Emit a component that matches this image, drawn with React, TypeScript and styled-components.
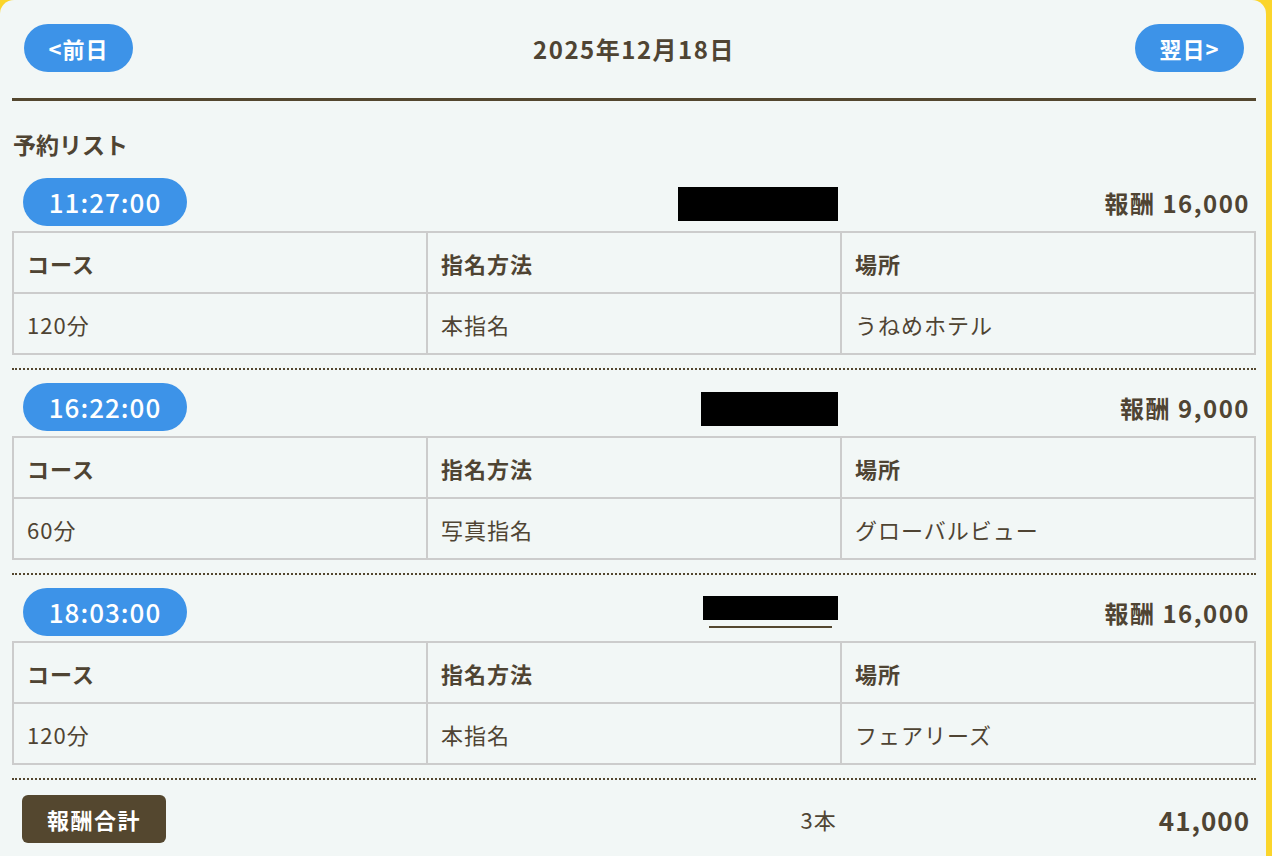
import styled, { createGlobalStyle } from 'styled-components';

interface IReservation {
  time: string;
  nameWidth: number; // 伏せ字の幅
  isLink: boolean;
  reward: string;
  course: string;
  method: string;
  place: string;
}

const reservations: Array<IReservation> = [
  { time: '11:27:00', nameWidth: 160, isLink: false, reward: '16,000', course: '120分', method: '本指名', place: 'うねめホテル' },
  { time: '16:22:00', nameWidth: 137, isLink: false, reward: '9,000', course: '60分', method: '写真指名', place: 'グローバルビュー' },
  { time: '18:03:00', nameWidth: 135, isLink: true, reward: '16,000', course: '120分', method: '本指名', place: 'フェアリーズ' },
];

const GlobalStyle = createGlobalStyle`
  html, body {
    margin: 0;
    background: #fbd52b;
  }
  body {
    font-family: "Noto Sans CJK JP", "Noto Sans", sans-serif;
    color: #4f4433;
  }
`;

const Card = styled.div`
  margin-right: 6px;
  min-height: 900px;
  padding: 24px 10px 0 12px;
  background: #f2f7f6;
  border-radius: 14px;
`;

const DayNav = styled.div`
  display: flex;
  justify-content: space-between;
  align-items: center;
  padding: 0 12px;
  margin-bottom: 26px;
`;

const NavBtn = styled.button`
  width: 109px;
  height: 48px;
  border: none;
  border-radius: 24px;
  background: #3d93e8;
  color: #fff;
  font-family: inherit;
  font-size: 22px;
  font-weight: 700;
  letter-spacing: 1px;
  cursor: pointer;
`;

const DateTitle = styled.h1`
  margin: 0;
  font-size: 24px;
  font-weight: 700;
  letter-spacing: 1.5px;
`;

const Divider = styled.hr`
  margin: 0;
  border: none;
  border-top: 3px solid #54472f;
`;

const SectionTitle = styled.h2`
  margin: 28px 0 19px 1px;
  font-size: 23px;
  font-weight: 700;
  line-height: 30px;
`;

const Item = styled.div`
  padding-bottom: 13px;
  margin-bottom: 13px;
  border-bottom: 2px dotted #54472f;
`;

const ItemHead = styled.div`
  display: grid;
  grid-template-columns: repeat(3, 1fr);
  align-items: center;
  padding: 0 7px 0 11px;
  margin-bottom: 5px;
`;

const TimePill = styled.span`
  justify-self: start;
  width: 164px;
  height: 48px;
  line-height: 48px;
  border-radius: 24px;
  background: #3d93e8;
  color: #fff;
  text-align: center;
  font-size: 26px;
  font-weight: 500;
  letter-spacing: 1px;
`;

const Redacted = styled.span<{ $w: number; $link: boolean }>`
  justify-self: end;
  margin-right: 2px;
  width: ${(p) => p.$w}px;
  height: ${(p) => (p.$link ? 24 : 34)}px;
  margin-top: ${(p) => (p.$link ? -2 : 4)}px;
  background: #000;
  border-bottom: ${(p) => (p.$link ? '6px solid #f2f7f6' : 'none')};
  box-shadow: ${(p) => (p.$link ? '0 8px 0 -6px #54472f' : 'none')};
`;

const Reward = styled.span`
  justify-self: end;
  font-size: 24px;
  font-weight: 700;
  letter-spacing: 1.5px;
  margin-right: -1px;
`;

const Table = styled.table`
  width: 100%;
  border-collapse: collapse;
  table-layout: fixed;
  font-size: 22px;
  letter-spacing: 1px;

  th, td {
    height: 59px;
    padding: 0 13px;
    border: 2px solid #cccccc;
    text-align: left;
  }
  th {
    font-weight: 700;
  }
  td {
    font-weight: 400;
  }
`;

const Footer = styled.div`
  display: grid;
  grid-template-columns: repeat(3, 1fr);
  align-items: center;
  padding: 2px 6px 0 10px;
`;

const TotalBadge = styled.span`
  justify-self: start;
  width: 144px;
  height: 48px;
  line-height: 48px;
  border-radius: 6px;
  background: #54472f;
  color: #fff;
  text-align: center;
  font-size: 22px;
  font-weight: 700;
  letter-spacing: 1.5px;
`;

const Count = styled.span`
  justify-self: end;
  margin-right: 4px;
  font-size: 22px;
  letter-spacing: 1px;
`;

const Total = styled.span`
  justify-self: end;
  font-size: 26px;
  font-weight: 700;
  letter-spacing: 1px;
`;

function ReservationItem({ r }: { r: IReservation }) {
  return (
    <Item>
      <ItemHead>
        <TimePill>{r.time}</TimePill>
        <Redacted $w={r.nameWidth} $link={r.isLink} />
        <Reward>報酬 {r.reward}</Reward>
      </ItemHead>
      <Table>
        <thead>
          <tr>
            <th>コース</th>
            <th>指名方法</th>
            <th>場所</th>
          </tr>
        </thead>
        <tbody>
          <tr>
            <td>{r.course}</td>
            <td>{r.method}</td>
            <td>{r.place}</td>
          </tr>
        </tbody>
      </Table>
    </Item>
  );
}

export default function App() {
  return (
    <>
      <GlobalStyle />
      <Card>
        <DayNav>
          <NavBtn>&lt;前日</NavBtn>
          <DateTitle>2025年12月18日</DateTitle>
          <NavBtn>翌日&gt;</NavBtn>
        </DayNav>
        <Divider />
        <SectionTitle>予約リスト</SectionTitle>
        {reservations.map((r, idx) => (
          <ReservationItem key={idx} r={r} />
        ))}
        <Footer>
          <TotalBadge>報酬合計</TotalBadge>
          <Count>3本</Count>
          <Total>41,000</Total>
        </Footer>
      </Card>
    </>
  );
}
